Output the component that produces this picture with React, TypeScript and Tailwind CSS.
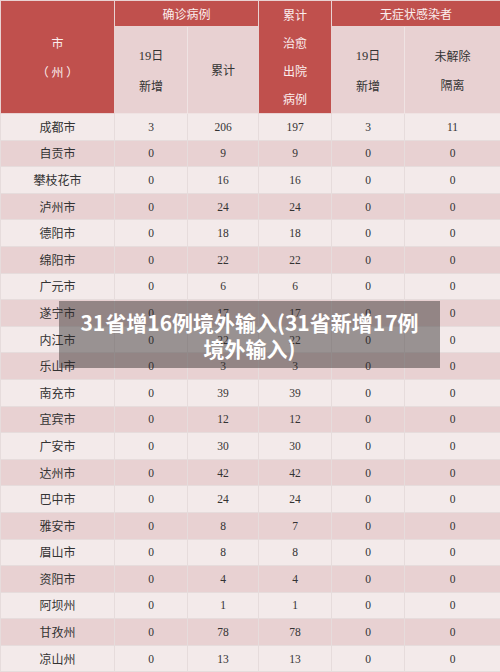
import React from 'react';

type Row = [string, number, number, number, number, number];

const rows: Row[] = [
  ['成都市', 3, 206, 197, 3, 11],
  ['自贡市', 0, 9, 9, 0, 0],
  ['攀枝花市', 0, 16, 16, 0, 0],
  ['泸州市', 0, 24, 24, 0, 0],
  ['德阳市', 0, 18, 18, 0, 0],
  ['绵阳市', 0, 22, 22, 0, 0],
  ['广元市', 0, 6, 6, 0, 0],
  ['遂宁市', 0, 17, 17, 0, 0],
  ['内江市', 0, 22, 22, 0, 0],
  ['乐山市', 0, 3, 3, 0, 0],
  ['南充市', 0, 39, 39, 0, 0],
  ['宜宾市', 0, 12, 12, 0, 0],
  ['广安市', 0, 30, 30, 0, 0],
  ['达州市', 0, 42, 42, 0, 0],
  ['巴中市', 0, 24, 24, 0, 0],
  ['雅安市', 0, 8, 7, 0, 0],
  ['眉山市', 0, 8, 8, 0, 0],
  ['资阳市', 0, 4, 4, 0, 0],
  ['阿坝州', 0, 1, 1, 0, 0],
  ['甘孜州', 0, 78, 78, 0, 0],
  ['凉山州', 0, 13, 13, 0, 0],
];

const cjk = "font-['Noto_Sans_CJK_SC','Noto_Sans',sans-serif]";
const serif = "font-['Liberation_Serif','Noto_Sans_CJK_SC',serif]";

export default function App() {
  return (
    <div className="relative h-[672px] w-[500px] overflow-hidden bg-[#f3eaea]">
      <table className="w-[500px] table-fixed border-collapse text-center text-[#333]">
        <colgroup>
          <col className="w-[114px]" />
          <col className="w-[73px]" />
          <col className="w-[71px]" />
          <col className="w-[73px]" />
          <col className="w-[73px]" />
          <col className="w-[96px]" />
        </colgroup>
        <thead>
          <tr className="h-[26px]">
            <th
              rowSpan={2}
              className={`border border-[#e9d2d2] bg-[#c0504d] p-0 text-[12px] font-normal leading-[29px] text-[#fbeeee] ${cjk}`}
            >
              <div>市</div>
              <div>（ 州 ）</div>
            </th>
            <th
              colSpan={2}
              className={`border border-[#e9d2d2] bg-[#c0504d] p-0 text-[12px] font-normal text-[#fbeeee] ${cjk}`}
            >
              确诊病例
            </th>
            <th
              rowSpan={2}
              className={`border border-[#e9d2d2] bg-[#c0504d] p-0 text-[12px] font-normal leading-[28px] text-[#fbeeee] ${cjk}`}
            >
              <div>累计</div>
              <div>治愈</div>
              <div>出院</div>
              <div>病例</div>
            </th>
            <th
              colSpan={2}
              className={`border border-[#e9d2d2] bg-[#c0504d] p-0 text-[12px] font-normal text-[#fbeeee] ${cjk}`}
            >
              无症状感染者
            </th>
          </tr>
          <tr className="h-[87px] bg-[#e8d1d2]">
            <th className={`border border-[#efe3e3] p-0 text-[12px] font-normal leading-[29px] ${cjk}`}>
              <div>
                <span className={`${serif} text-[12.5px]`}>19</span>日
              </div>
              <div>新增</div>
            </th>
            <th className={`border border-[#efe3e3] p-0 text-[12px] font-normal ${cjk}`}>累计</th>
            <th className={`border border-[#efe3e3] p-0 text-[12px] font-normal leading-[29px] ${cjk}`}>
              <div>
                <span className={`${serif} text-[12.5px]`}>19</span>日
              </div>
              <div>新增</div>
            </th>
            <th className={`border border-[#efe3e3] p-0 text-[12px] font-normal leading-[29px] ${cjk}`}>
              <div>未解除</div>
              <div>隔离</div>
            </th>
          </tr>
        </thead>
        <tbody>
          {rows.map((r, i) => (
            <tr
              key={r[0]}
              className={`h-[26.6px] ${i % 2 === 0 ? 'bg-[#f3eaea]' : 'bg-[#e8d1d2]'}`}
            >
              <td className={`border border-[#e6dcdc] p-0 text-[12px] leading-[16px] ${cjk}`}>{r[0]}</td>
              {r.slice(1).map((v, j) => (
                <td key={j} className={`border border-[#e6dcdc] p-0 text-[11.5px] leading-[16px] ${serif}`}>
                  {v}
                </td>
              ))}
            </tr>
          ))}
        </tbody>
      </table>

      <div className="absolute left-[59px] top-[301px] flex h-[67px] w-[381px] flex-col items-center justify-center bg-[rgba(45,40,40,0.45)]">
        <p className={`text-center text-[21px] font-bold leading-[26px] text-white ${cjk}`}>
          <span className="block">31省增16例境外输入(31省新增17例</span>
          <span className="block">境外输入)</span>
        </p>
      </div>
    </div>
  );
}
